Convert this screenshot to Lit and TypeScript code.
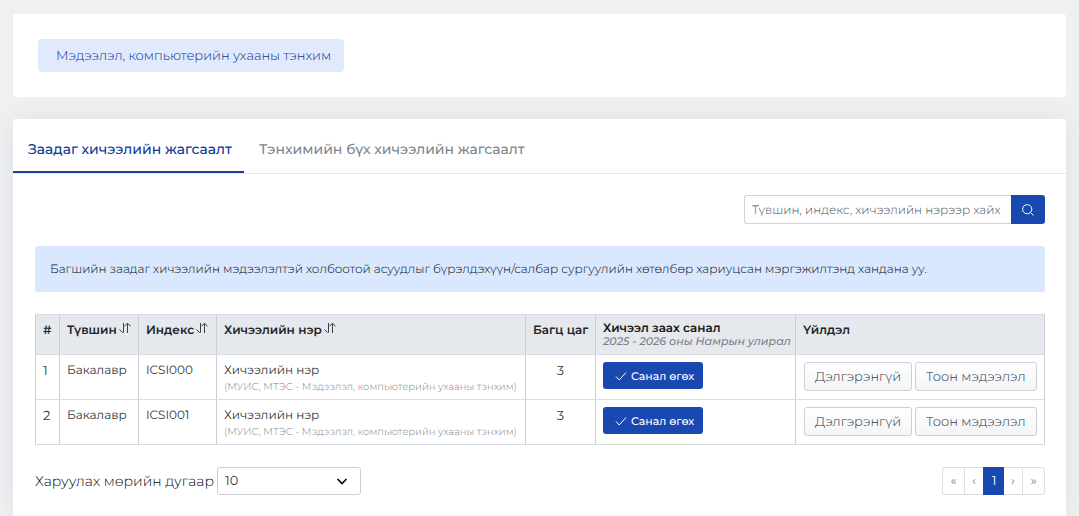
import { LitElement, html, css, svg } from "lit";
import { customElement, state } from "lit/decorators.js";

interface Course {
  no: number;
  level: string;
  index: string;
  name: string;
  unit: string;
  credit: number;
}

const UNIT = "МУИС, МТЭС - Мэдээлэл, компьютерийн ухааны тэнхим";

const COURSES: Course[] = [
  { no: 1, level: "Бакалавр", index: "ICSI000", name: "Хичээлийн нэр", unit: UNIT, credit: 3 },
  { no: 2, level: "Бакалавр", index: "ICSI001", name: "Хичээлийн нэр", unit: UNIT, credit: 3 },
];

const icon = (d: unknown, cls = "") =>
  html`<svg class="icon ${cls}" viewBox="0 0 12 12" aria-hidden="true">${d}</svg>`;

const sortIcon = () =>
  icon(svg`<path d="M0.5 7.5L3.5 10.5H4.5V1M8.5 11V1.2M5.3 4.4L8.5 1.2L11.7 4.4"/>`, "sort");

@customElement("app-root")
export class AppRoot extends LitElement {
  @state() private tab = 0;

  static styles = css`
    :host {
      display: block;
      box-sizing: border-box;
      min-height: 100vh;
      padding: 14px 13px 0;
      background: #eff0f2;
      color: #212529;
      font: 400 13px/18px Montserrat, Inter, "Noto Sans", sans-serif;
      text-rendering: geometricPrecision;
    }
    *, *::before, *::after { box-sizing: border-box; }
    button, input, select { font-family: inherit; margin: 0; text-rendering: inherit; }
    button { cursor: pointer; }
    .icon {
      fill: none;
      stroke: currentColor;
      stroke-width: 1;
      width: 12px;
      height: 12px;
      flex: none;
    }
    .card { background: #fff; border-radius: 3px; }
    .top { padding: 25px; margin-bottom: 22px; }
    .chip {
      display: inline-flex;
      align-items: center;
      height: 33px;
      padding: 0 13px 0 18px;
      border: 0;
      border-radius: 4px;
      background: #e1e9fd;
      color: #0a3192;
      font-size: 13px;
      font-weight: 300;
      vertical-align: top;
    }
    .main { border-radius: 3px 3px 0 0; box-shadow: 0 0 24px rgba(40, 50, 70, 0.08); }
    .tabs {
      display: flex;
      border-bottom: 1px solid #e6e8ea;
    }
    .tab {
      height: 54px;
      padding: 8px 12px 0 15px;
      border: 0;
      border-bottom: 2px solid transparent;
      background: none;
      color: #7f858f;
      font-size: 14px;
      font-weight: 500;
    }
    .tab.active { color: #0f3890; border-bottom-color: #173f97; }
    .body { padding: 21px 21px 21px 22px; }
    .search { display: flex; justify-content: flex-end; margin-bottom: 22px; }
    .search input {
      width: 267px;
      height: 29px;
      padding: 1px 7px 0;
      border: 1px solid #ced4da;
      border-right: 0;
      border-radius: 3px 0 0 3px;
      color: #495057;
      font-size: 12px;
      font-weight: 300;
    }
    .search input::placeholder { color: #4c5259; opacity: 1; }
    .search button {
      display: flex;
      align-items: center;
      justify-content: center;
      width: 34px;
      height: 29px;
      padding: 0;
      border: 0;
      border-radius: 0 3px 3px 0;
      background: #1a48b1;
      color: #fff;
    }
    .note {
      margin: 0 0 22px;
      padding: 15px 15px 13px;
      border-radius: 3px;
      background: #d9e8ff;
      color: #060b12;
      font-size: 12px;
      font-weight: 300;
    }
    .courses {
      width: 100%;
      table-layout: fixed;
      border-collapse: collapse;
      margin-bottom: 22px;
      font-size: 12px;
    }
    .c-no { width: 24px; }
    .c-level { width: 79px; }
    .c-index { width: 78px; }
    .c-credit { width: 70px; }
    .c-offer { width: 200px; }
    .c-action { width: 249px; }
    th, td {
      padding: 7px 7px 0;
      border: 1px solid #d9dde3;
      border-left-color: #c9ced8;
      border-right-color: #c9ced8;
      text-align: left;
      vertical-align: top;
      white-space: nowrap;
    }
    th { height: 40px; background: #e5e8ec; color: #212529; font-weight: 600; }
    td { height: 45px; color: #33373c; }
    .sort-btn {
      display: flex;
      align-items: flex-start;
      gap: 2px;
      padding: 0;
      border: 0;
      background: none;
      color: inherit;
      font-size: 12px;
      line-height: 18px;
      font-weight: 600;
    }
    .sort { color: #3c4045; }
    .offer-title { display: block; line-height: 13px; color: #14171a; }
    .term { display: block; font-size: 11px; line-height: 12px; color: #7b808b; font-style: italic; font-weight: 500; }
    .unit { display: block; font-size: 10px; line-height: 14px; color: #80858e; font-weight: 300; }
    .num, .mid { font-size: 13px; }
    .mid { text-align: center; }
    .primary {
      display: flex;
      align-items: center;
      gap: 4px;
      height: 27px;
      padding: 0 9px 0 12px;
      border: 0;
      border-radius: 3px;
      background: #1a48b1;
      color: #fff;
      font-size: 11px;
      font-weight: 500;
    }
    .actions { display: flex; gap: 3px; padding-left: 1px; }
    .plain {
      height: 29px;
      padding: 0 10px;
      border: 1px solid #c9d0d9;
      border-radius: 3px;
      background: linear-gradient(#fff, #f3f4f6);
      color: #2f3645;
      font-size: 13px;
      font-weight: 300;
    }
    .foot { display: flex; align-items: center; justify-content: space-between; }
    .size { display: flex; align-items: center; gap: 3px; font-size: 14px; font-weight: 300; color: #060708; }
    .pick { display: grid; align-items: center; }
    .pick > * { grid-area: 1 / 1; }
    .pick .icon { justify-self: end; margin-right: 13px; stroke-width: 1.6; pointer-events: none; }
    .pick select {
      appearance: none;
      width: 144px;
      height: 28px;
      padding: 0 7px;
      border: 1px solid #c9ced8;
      border-radius: 3px;
      background: #fff;
      color: #33383e;
      font-size: 13px;
    }
    .pages { display: flex; margin: 0; padding: 0; list-style: none; }
    .pages a {
      display: flex;
      align-items: center;
      justify-content: center;
      width: 19px;
      height: 28px;
      border: 1px solid #dcdfe4;
      border-right: 0;
      color: #7d828a;
      font-size: 13px;
      text-decoration: none;
    }
    .pages .end a { width: 22px; }
    .pages li:first-child a { border-radius: 3px 0 0 3px; }
    .pages li:last-child a { width: 23px; border-right: 1px solid #dcdfe4; border-radius: 0 3px 3px 0; }
    .pages .current { width: 21px; border-color: #1a48b1; background: #1a48b1; color: #fff; }
    .pages .after a { border-left: 0; width: 18px; }
  `;

  private sortable(label: string) {
    return html`<th scope="col"><button class="sort-btn" type="button">${label}${sortIcon()}</button></th>`;
  }

  private row(c: Course) {
    return html`<tr>
      <td class="num">${c.no}</td>
      <td>${c.level}</td>
      <td>${c.index}</td>
      <td>${c.name}<span class="unit">(${c.unit})</span></td>
      <td class="mid">${c.credit}</td>
      <td>
        <button class="primary" type="button">
          ${icon(svg`<path d="M1 6.5L4.2 10L11 2.5"/>`)}Санал өгөх
        </button>
      </td>
      <td>
        <div class="actions">
          <button class="plain" type="button">Дэлгэрэнгүй</button>
          <button class="plain" type="button">Тоон мэдээлэл</button>
        </div>
      </td>
    </tr>`;
  }

  render() {
    const tabs = ["Заадаг хичээлийн жагсаалт", "Тэнхимийн бүх хичээлийн жагсаалт"];
    return html`
      <section class="card top">
        <button class="chip" type="button">Мэдээлэл, компьютерийн ухааны тэнхим</button>
      </section>
      <main class="card main">
        <div class="tabs" role="tablist">
          ${tabs.map((t, i) => html`<button
            class="tab ${i === this.tab ? "active" : ""}" type="button" role="tab"
            aria-selected=${i === this.tab} @click=${() => (this.tab = i)}>${t}</button>`)}
        </div>
        <div class="body">
          <form class="search" role="search" @submit=${(e: Event) => e.preventDefault()}>
            <input type="text" aria-label="Хайх" placeholder="Түвшин, индекс, хичээлийн нэрээр хайх" />
            <button type="submit" aria-label="Хайх">
              ${icon(svg`<circle cx="5.2" cy="5.2" r="4.6"/><path d="M8.5 8.5L11.6 11.6"/>`)}
            </button>
          </form>
          <p class="note">Багшийн заадаг хичээлийн мэдээлэлтэй холбоотой асуудлыг бүрэлдэхүүн/салбар сургуулийн хөтөлбөр хариуцсан мэргэжилтэнд хандана уу.</p>
          <table class="courses">
            <colgroup>
              <col class="c-no" /><col class="c-level" /><col class="c-index" /><col />
              <col class="c-credit" /><col class="c-offer" /><col class="c-action" />
            </colgroup>
            <thead>
              <tr>
                <th scope="col">#</th>
                ${this.sortable("Түвшин")}${this.sortable("Индекс")}${this.sortable("Хичээлийн нэр")}
                <th scope="col">Багц цаг</th>
                <th scope="col">
                  <span class="offer-title">Хичээл заах санал</span>
                  <span class="term">2025 - 2026 оны Намрын улирал</span>
                </th>
                <th scope="col">Үйлдэл</th>
              </tr>
            </thead>
            <tbody>${COURSES.map((c) => this.row(c))}</tbody>
          </table>
          <div class="foot">
            <div class="size">
              <label for="size">Харуулах мөрийн дугаар</label>
              <span class="pick">
                <select id="size"><option>10</option><option>20</option><option>50</option></select>
                ${icon(svg`<path d="M1.5 4L6 8.5L10.5 4"/>`)}
              </span>
            </div>
            <ul class="pages">
              <li class="end"><a href="#">«</a></li>
              <li><a href="#">‹</a></li>
              <li><a class="current" href="#" aria-current="page">1</a></li>
              <li class="after"><a href="#">›</a></li>
              <li class="end"><a href="#">»</a></li>
            </ul>
          </div>
        </div>
      </main>
    `;
  }
}
